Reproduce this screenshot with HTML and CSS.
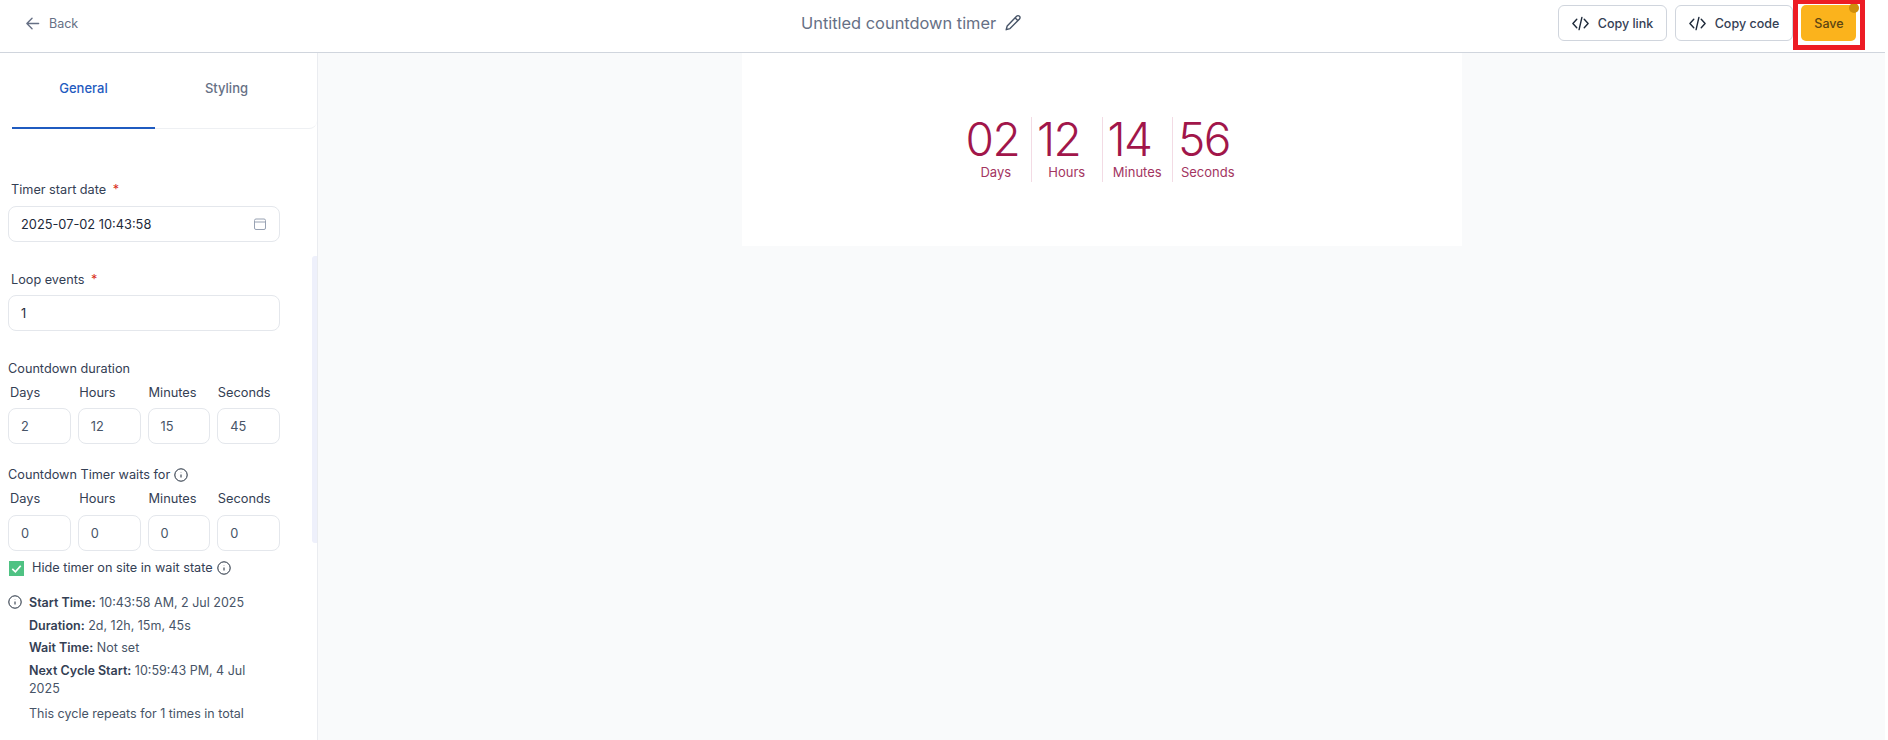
FILE: index.html
```html
<!DOCTYPE html>
<html lang="en">
<head>
<meta charset="utf-8">
<title>Untitled countdown timer</title>
<link rel="stylesheet" href="styles.css">
</head>
<body>
<header class="topbar">
  <a class="back">
    <svg class="back-icon" viewBox="0 0 16 16" fill="none" stroke="currentColor" stroke-width="1.5" stroke-linecap="round" stroke-linejoin="round"><path d="M14.5 8H2M7.5 2.5 2 8l5.5 5.5"/></svg>
    <span>Back</span>
  </a>
  <div class="title">
    <span>Untitled countdown timer</span>
    <svg class="pencil" viewBox="0 0 18 18" fill="none" stroke="currentColor" stroke-width="1.4" stroke-linejoin="round"><path d="M12.6 2.2a2 2 0 0 1 2.9 2.8L6 14.6l-3.8 1.1 1-3.8z"/><path d="M11 3.8l3 3"/></svg>
  </div>
  <div class="actions">
    <button class="btn btn-link"><svg class="code" viewBox="0 0 18 16" fill="none" stroke="currentColor" stroke-width="1.5" stroke-linecap="round" stroke-linejoin="round"><path d="M5 3.5.9 8 5 12.5M13 3.5 17.1 8 13 12.5M10.5 1.5l-3 13"/></svg>Copy link</button>
    <button class="btn btn-code"><svg class="code" viewBox="0 0 18 16" fill="none" stroke="currentColor" stroke-width="1.5" stroke-linecap="round" stroke-linejoin="round"><path d="M5 3.5.9 8 5 12.5M13 3.5 17.1 8 13 12.5M10.5 1.5l-3 13"/></svg>Copy code</button>
    <button class="btn-save">Save<span class="dot"></span></button>
  </div>
</header>
<div class="highlight"></div>
<div class="main">
  <aside class="sidebar">
    <div class="tabs">
      <div class="tab active">General</div>
      <div class="tab">Styling</div>
    </div>
    <div class="form">
      <label class="label first">Timer start date <i>*</i></label>
      <div class="input date">2025-07-02 10:43:58
        <svg class="cal" viewBox="0 0 14 14" fill="none" stroke="currentColor" stroke-width="1"><rect x="1.5" y="2" width="11" height="10.5" rx="1.5"/><path d="M1.5 5h11"/></svg>
      </div>
      <label class="label second">Loop events <i>*</i></label>
      <div class="input loop">1</div>

      <div class="head head-a">Countdown duration</div>
      <div class="cols"><span>Days</span><span>Hours</span><span>Minutes</span><span>Seconds</span></div>
      <div class="boxes"><div class="box">2</div><div class="box">12</div><div class="box">15</div><div class="box">45</div></div>

      <div class="head head-b">Countdown Timer waits for
        <svg class="info" viewBox="0 0 14 14" fill="none" stroke="currentColor" stroke-width="1"><circle cx="7" cy="7" r="6.2"/><path d="M7 6.5v3M7 4.4v.3"/></svg>
      </div>
      <div class="cols"><span>Days</span><span>Hours</span><span>Minutes</span><span>Seconds</span></div>
      <div class="boxes boxes-b"><div class="box">0</div><div class="box">0</div><div class="box">0</div><div class="box">0</div></div>

      <div class="check-row">
        <span class="check"><svg viewBox="0 0 16 16" fill="none" stroke="#fff" stroke-width="1.8"><path d="M3.5 8.5 6.8 11.5 12.5 5"/></svg></span>
        <span>Hide timer on site in wait state</span>
        <svg class="info" viewBox="0 0 14 14" fill="none" stroke="currentColor" stroke-width="1"><circle cx="7" cy="7" r="6.2"/><path d="M7 6.5v3M7 4.4v.3"/></svg>
      </div>

      <div class="summary">
        <svg class="info sum-icon" viewBox="0 0 14 14" fill="none" stroke="currentColor" stroke-width="1"><circle cx="7" cy="7" r="6.2"/><path d="M7 6.5v3M7 4.4v.3"/></svg>
        <div class="sum-text">
          <p><b>Start Time:</b> 10:43:58 AM, 2 Jul 2025</p>
          <p><b>Duration:</b> 2d, 12h, 15m, 45s</p>
          <p><b>Wait Time:</b> Not set</p>
          <p><b>Next Cycle Start:</b> 10:59:43 PM, 4 Jul 2025</p>
          <p class="last">This cycle repeats for 1 times in total</p>
        </div>
      </div>
    </div>
    <div class="scroll-thumb"></div>
  </aside>
  <main class="canvas">
    <section class="card">
      <div class="timer">
        <div class="unit"><div class="num">02</div><div class="cap">Days</div></div>
        <div class="unit"><div class="num">12</div><div class="cap">Hours</div></div>
        <div class="unit"><div class="num">14</div><div class="cap">Minutes</div></div>
        <div class="unit"><div class="num">56</div><div class="cap">Seconds</div></div>
      </div>
    </section>
  </main>
</div>
</body>
</html>
```
FILE: styles.css
```css
* { box-sizing: border-box; }
html, body { margin: 0; height: 100%; overflow: hidden; }
body { font-family: Inter, "Liberation Sans", sans-serif; color: #344054; background: #fff; position: relative; padding-right: 3px; }

.topbar { height: 53px; border-bottom: 1px solid #d0d5dd; display: grid; grid-template-columns: 776px auto 1fr; align-items: center; padding: 0 29px 6px 25px; background: #fff; }
.back { display: flex; align-items: center; gap: 9px; font-size: 12.5px; color: #667085; }
.back-icon { width: 15px; height: 15px; }
.title { display: flex; align-items: center; gap: 8px; font-size: 16.4px; color: #667085; }
.pencil { width: 18px; height: 18px; color: #475467; }
.actions { display: flex; justify-content: flex-end; gap: 8px; }
.btn { height: 36px; display: flex; align-items: center; justify-content: center; gap: 9px; background: #fff; border: 1px solid #d0d5dd; border-radius: 6px; font: 450 12.5px Inter, sans-serif; color: #344054; padding: 0; }
.btn-link { width: 109px; }
.btn-code { width: 118px; }
.code { width: 17px; height: 15px; color: #1d2939; }
.btn-save { position: relative; width: 55px; height: 36px; border: 0; border-radius: 5px; background: #fbb31c; color: #5b4513; font: 450 12.5px Inter, sans-serif; padding: 0 0 0 1px; }
.dot { position: absolute; right: -3px; top: -2px; width: 10px; height: 10px; border-radius: 50%; background: #cf8e0c; }
.highlight { position: absolute; left: 1793px; top: 0; width: 72px; height: 50px; border: 5px solid #ed1c24; border-top-width: 4px; pointer-events: none; }

.main { display: flex; height: calc(100% - 53px); }
.sidebar { position: relative; width: 318px; flex: none; border-right: 1px solid #eaecf0; background: #fff; }
.tabs { display: flex; height: 76px; margin-left: 12px; border-bottom: 1px solid #eef0f3; border-bottom-right-radius: 8px; }
.tab { width: 143px; padding-top: 27px; text-align: center; font-size: 13px; font-weight: 500; color: #667085; }
.tab.active { color: #1f5bc0; border-bottom: 2px solid #1f5bc0; height: 76px; }
.form { padding: 0 0 0 8px; width: 280px; }
.label { display: block; font-size: 12.7px; color: #344054; padding-left: 3px; line-height: 16px; }
.label i { color: #d92d20; font-style: normal; margin-left: 3px; }
.label.first { margin-top: 53px; }
.label.second { margin-top: 30px; }
.input { height: 36px; border: 1px solid #e4e7ec; border-radius: 8px; margin-top: 8px; display: flex; align-items: center; justify-content: space-between; padding: 0 12px; font-size: 12.8px; color: #1d2939; }
.loop { margin-top: 7px; }
.cal { width: 14px; height: 14px; color: #98a2b3; }
.head { font-size: 12.7px; color: #344054; line-height: 16px; display: flex; align-items: center; gap: 4px; }
.head-a { margin-top: 30px; }
.head-b { margin-top: 23px; }
.info { width: 14px; height: 14px; flex: none; color: #1d2939; }
.cols { display: grid; grid-template-columns: repeat(4, 1fr); gap: 7px; margin-top: 8px; padding-left: 2px; font-size: 12.8px; line-height: 16px; color: #344054; }
.boxes { display: grid; grid-template-columns: repeat(4, 1fr); gap: 7px; margin-top: 7px; }
.boxes-b { margin-top: 8px; }
.box { height: 36px; border: 1px solid #e4e7ec; border-radius: 8px; display: flex; align-items: center; padding-left: 12px; font-size: 12.8px; color: #475467; }
.check-row { display: flex; align-items: center; margin-top: 9px; font-size: 12.7px; color: #344054; line-height: 16px; }
.check { width: 15px; height: 15px; flex: none; background: #4fc283; margin-right: 8px; display: flex; margin-left: 1px; }
.check svg { width: 15px; height: 15px; }
.check-row .info { margin-left: 4px; }
.summary { display: flex; gap: 7px; margin-top: 18px; font-size: 12.5px; color: #475467; }
.sum-icon { margin-top: 1px; }
.sum-text { max-width: 225px; }
.sum-text p { margin: 0 0 4.5px; line-height: 18px; }
.sum-text p.last { margin-top: 7px; }
.sum-text b { font-weight: 600; color: #344054; }
.scroll-thumb { position: absolute; right: 0; top: 203px; width: 5px; height: 287px; background: #eef0fb; border-radius: 3px 0 0 3px; }

.canvas { flex: 1; background: #f9fafb; display: flex; justify-content: center; min-width: 0; }
.card { width: 720px; height: 193px; background: #fff; display: flex; justify-content: center; padding-top: 64px; }
.timer { display: flex; height: 65px; color: #a1164a; }
.unit { width: 70.5px; text-align: center; border-left: 1px solid #f3dbe4; }
.unit:first-child { border-left: 0; }
.num { font-size: 46px; font-weight: 350; line-height: 44px; letter-spacing: -1.5px; text-align: left; padding-left: 5px; }
.cap { font-size: 13px; line-height: 18px; margin-top: 2px; color: #a3355f; }
```
